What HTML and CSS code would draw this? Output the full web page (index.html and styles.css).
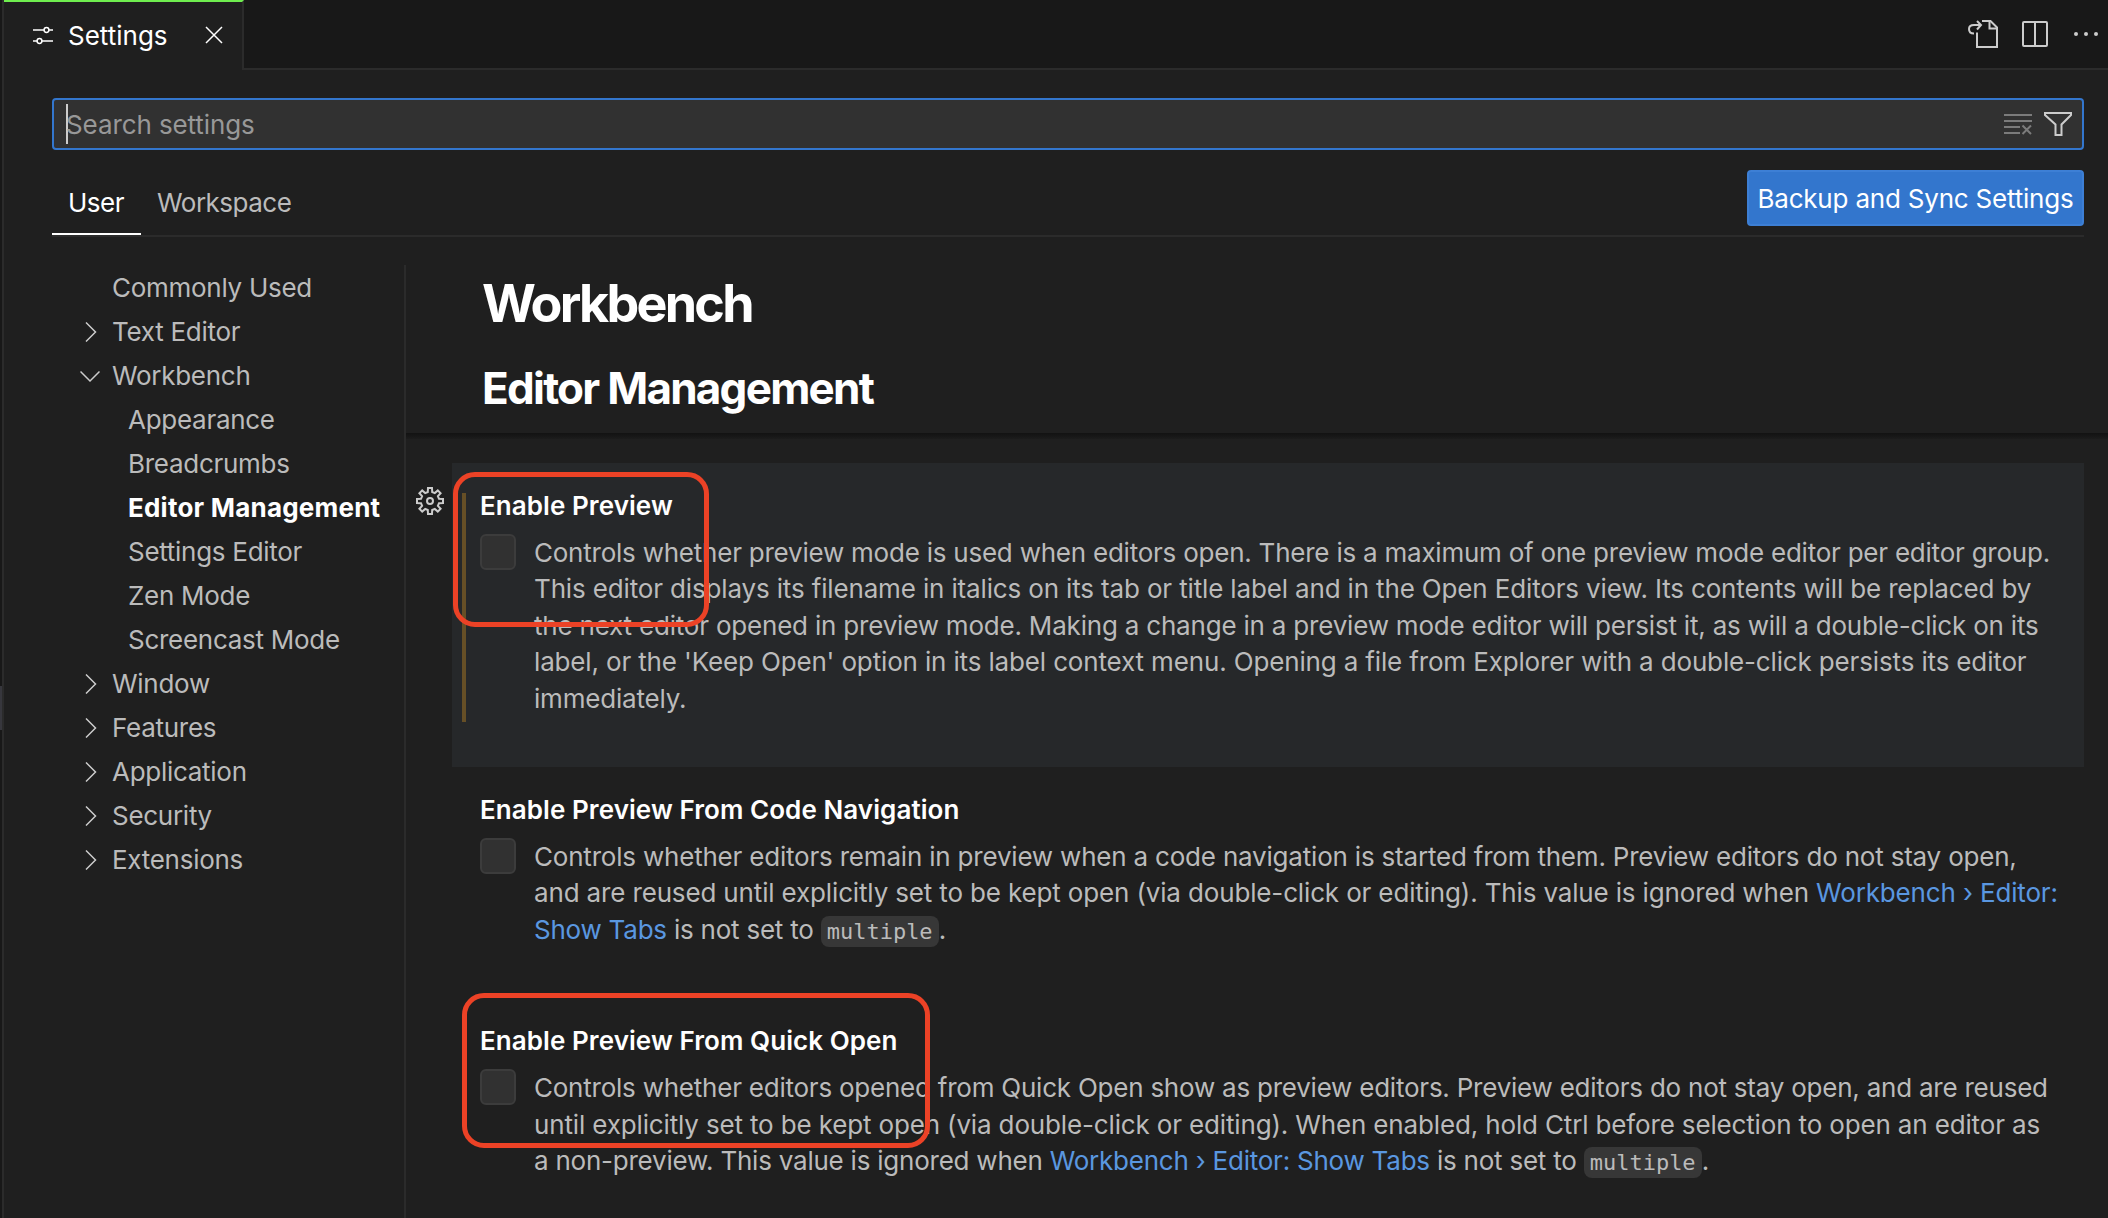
FILE: index.html
```html
<!DOCTYPE html>
<html lang="en">
<head>
  <meta charset="UTF-8">
  <meta name="viewport" content="width=device-width, initial-scale=1.0">
  <title>Settings</title>
  <link rel="stylesheet" href="styles.css">
</head>
<body>
  <div class="sash"></div>
  <div class="editor">
    <header class="tab-bar">
      <div class="tab">
        <svg class="tab-icon" width="20" height="20" viewBox="0 0 20 20">
          <path d="M0 5h11M16 5h4M0 16h4M9 16h11"/>
          <circle cx="13.5" cy="5" r="2.4"/>
          <circle cx="6.5" cy="16" r="2.4"/>
        </svg>
        <span class="tab-label">Settings</span>
        <svg class="tab-close" width="18" height="18" viewBox="0 0 18 18">
          <path d="M1 1l16 16M17 1L1 17"/>
        </svg>
      </div>
      <div class="tab-actions">
        <svg width="30" height="30" viewBox="0 0 30 30">
          <path d="M14 2h8.500l6.500 6.500v19.500h-20v-14.500"/>
          <path d="M21.500 2v7.500h7.500"/>
          <path d="M6 14.500c-3 0-5-1.800-5-4.500s2-4 5-4h7M9 2l4 4-4 4.500"/>
        </svg>
        <svg width="26" height="26" viewBox="0 0 26 26">
          <rect x="1" y="1" width="24" height="24" rx="1"/>
          <path d="M13 1v24"/>
        </svg>
        <svg class="dots" width="24" height="6" viewBox="0 0 24 6">
          <circle cx="2" cy="3" r="2"/>
          <circle cx="12" cy="3" r="2"/>
          <circle cx="22" cy="3" r="2"/>
        </svg>
      </div>
    </header>

    <div class="settings-header">
      <div class="search">
        <span class="caret"></span>
        <span class="placeholder">Search settings</span>
        <svg class="clear-icon" width="28" height="22" viewBox="0 0 28 22">
          <path d="M0 2h28M0 8h28M0 14h16M0 20h16M18.500 12.500l8.500 8.500M27 12.500l-8.500 8.500"/>
        </svg>
        <svg class="filter-icon" width="28" height="24" viewBox="0 0 28 24">
          <path d="M1 1h26v2l-9.500 9.500v10.500h-6v-10.500L1 3z"/>
        </svg>
      </div>
      <div class="scope-row">
        <div class="scope active">User</div>
        <div class="scope">Workspace</div>
        <button class="sync-button">Backup and Sync Settings</button>
      </div>
    </div>

    <div class="settings-body">
      <nav class="toc">
        <div class="toc-row">Commonly Used</div>
        <div class="toc-row"><svg class="chevron" width="20" height="20" viewBox="0 0 20 20"><path d="M6 .5l9.500 9.500L6 19.500"/></svg>Text Editor</div>
        <div class="toc-row"><svg class="chevron" width="20" height="20" viewBox="0 0 20 20"><path d="M.5 5.500l9.500 9.500 9.500-9.500"/></svg>Workbench</div>
        <div class="toc-row child">Appearance</div>
        <div class="toc-row child">Breadcrumbs</div>
        <div class="toc-row child selected">Editor Management</div>
        <div class="toc-row child">Settings Editor</div>
        <div class="toc-row child">Zen Mode</div>
        <div class="toc-row child">Screencast Mode</div>
        <div class="toc-row"><svg class="chevron" width="20" height="20" viewBox="0 0 20 20"><path d="M6 .5l9.500 9.500L6 19.500"/></svg>Window</div>
        <div class="toc-row"><svg class="chevron" width="20" height="20" viewBox="0 0 20 20"><path d="M6 .5l9.500 9.500L6 19.500"/></svg>Features</div>
        <div class="toc-row"><svg class="chevron" width="20" height="20" viewBox="0 0 20 20"><path d="M6 .5l9.500 9.500L6 19.500"/></svg>Application</div>
        <div class="toc-row"><svg class="chevron" width="20" height="20" viewBox="0 0 20 20"><path d="M6 .5l9.500 9.500L6 19.500"/></svg>Security</div>
        <div class="toc-row"><svg class="chevron" width="20" height="20" viewBox="0 0 20 20"><path d="M6 .5l9.500 9.500L6 19.500"/></svg>Extensions</div>
      </nav>

      <main class="content">
        <div class="headings">
          <h1>Workbench</h1>
          <h2>Editor Management</h2>
        </div>
        <div class="scroll-shadow"></div>

        <section class="setting focused">
          <svg class="gear" width="28" height="28" viewBox="-14 -14 28 28">
            <path d="M-2.200-9L-2-13h4l.2 4 2.600 1.100L7.800-10.600l2.800 2.800L7.900-4.800 9-2.200l4 .2v4l-4 .2-1.100 2.600 2.700 3-2.800 2.800-3-2.700L2.200 9 2 13h-4l-.2-4-2.600-1.100-3 2.700-2.800-2.800 2.700-3L-9 2.200-13 2v-4l4-.2 1.100-2.600-2.700-3 2.800-2.800 3 2.700z"/>
            <circle cx="0" cy="0" r="3"/>
          </svg>
          <span class="modified"></span>
          <h3>Enable Preview</h3>
          <div class="setting-row">
            <span class="checkbox"></span>
            <p>
              <span class="tight">Controls whether preview mode is used when editors open. There is a maximum of one preview mode editor per editor group.</span><br>
              <span class="loose">This editor displays its filename in italics on its tab or title label and in the Open Editors view. Its contents will be replaced by</span><br>
              the next editor opened in preview mode. Making a change in a preview mode editor will persist it, as will a double-click on its<br>
              <span class="loose">label, or the 'Keep Open' option in its label context menu. Opening a file from Explorer with a double-click persists its editor</span><br>
              immediately.
            </p>
          </div>
          <span class="mark mark-preview"></span>
        </section>

        <section class="setting">
          <h3>Enable Preview From Code Navigation</h3>
          <div class="setting-row">
            <span class="checkbox"></span>
            <p>
              Controls whether editors remain in preview when a code navigation is started from them. Preview editors do not stay open,<br>
              <span class="loose">and are reused until explicitly set to be kept open (via double-click or editing). This value is ignored when <a href="#">Workbench › Editor:</a></span><br>
              <span class="tight"><a href="#">Show Tabs</a> is not set to <code>multiple</code>.</span>
            </p>
          </div>
        </section>

        <section class="setting">
          <h3>Enable Preview From Quick Open</h3>
          <div class="setting-row">
            <span class="checkbox"></span>
            <p>
              <span class="tight">Controls whether editors opened from Quick Open show as preview editors. Preview editors do not stay open, and are reused</span><br>
              <span class="loose">until explicitly set to be kept open (via double-click or editing). When enabled, hold Ctrl before selection to open an editor as</span><br>
              <span class="tight">a non-preview. This value is ignored when <a href="#">Workbench › Editor: Show Tabs</a> is not set to <code>multiple</code>.</span>
            </p>
          </div>
          <span class="mark mark-quick-open"></span>
        </section>
      </main>
    </div>
  </div>
</body>
</html>
```

FILE: styles.css
```css
:root {
  --bg: #1f1f1f;
  --bar: #181818;
  --border: #2b2b2b;
  --text: #bbbbbb;
  --blue: #3376cd;
  --link: #5a97e0;
  --mark: #ec4226;
}

* {
  box-sizing: border-box;
}

body {
  margin: 0;
  height: 1218px;
  display: flex;
  overflow: hidden;
  background: var(--bg);
  color: var(--text);
  font-family: Inter, "Liberation Sans", sans-serif;
  font-size: 26px;
  letter-spacing: -0.2px;
}

svg {
  flex: none;
  fill: none;
  stroke: #cccccc;
  stroke-width: 2;
}

.sash {
  width: 4px;
  flex: none;
  border-right: 2px solid var(--border);
  background: linear-gradient(var(--bar) 686px, #37373d 686px, #37373d 730px, var(--bar) 730px);
}

.editor {
  flex: 1;
  min-width: 0;
  display: flex;
  flex-direction: column;
}

/* tab bar */
.tab-bar {
  height: 70px;
  flex: none;
  display: flex;
  background: linear-gradient(var(--bar) 68px, var(--border) 68px);
}

.tab {
  width: 240px;
  display: flex;
  align-items: center;
  padding: 0 19px 2px 29px;
  background: var(--bg);
  border-top: 2px solid #6fee4f;
  border-right: 2px solid var(--border);
  color: #ffffff;
  letter-spacing: 0;
}

.tab svg {
  stroke: #ffffff;
  stroke-width: 1.5;
}

.tab-label {
  flex: 1;
  margin-left: 15px;
}

.tab-actions {
  flex: 1;
  display: flex;
  justify-content: flex-end;
  align-items: center;
  padding: 0 10px 2px 0;
  gap: 24px;
}

.dots {
  margin-left: 2px;
  fill: #cccccc;
  stroke: none;
}

/* search and scope tabs */
.settings-header {
  padding: 28px 24px 0 48px;
}

.search {
  height: 52px;
  display: flex;
  align-items: center;
  padding: 0 10px 0 12px;
  background: #313131;
  border: 2px solid var(--blue);
  border-radius: 4px;
}

.caret {
  width: 2px;
  height: 40px;
  margin-right: -2px;
  background: #cccccc;
}

.placeholder {
  flex: 1;
  color: #989898;
  letter-spacing: -0.1px;
}

.clear-icon {
  margin-right: 12px;
  stroke: #7b7b7b;
}

.scope-row {
  height: 87px;
  display: flex;
  align-items: flex-end;
  border-bottom: 2px solid var(--border);
}

.scope {
  height: 63px;
  padding: 0 16px;
  line-height: 62px;
  letter-spacing: -0.5px;
}

.scope.active {
  width: 89px;
  color: #ffffff;
  border-bottom: 2px solid #ffffff;
}

.sync-button {
  width: 337px;
  height: 56px;
  margin: 0 0 9px auto;
  padding: 0;
  background: var(--blue);
  border: 2px solid #3d7fd5;
  border-radius: 4px;
  color: #ffffff;
  font: inherit;
  letter-spacing: inherit;
}

/* sections tree */
.settings-body {
  flex: 1;
  min-height: 0;
  display: flex;
  padding-top: 28px;
}

.toc {
  width: 402px;
  flex: none;
  border-right: 2px solid var(--border);
  padding: 1px 0 0 108px;
  letter-spacing: -0.28px;
}

.toc-row {
  height: 44px;
  line-height: 46px;
  display: flex;
  align-items: center;
}

.toc-row.child {
  padding-left: 16px;
}

.toc-row.selected {
  color: #ffffff;
  font-weight: 700;
  letter-spacing: 0.22px;
}

.chevron {
  margin: 0 12px 0 -32px;
  stroke-width: 1.5;
}

/* settings list */
.content {
  flex: 1;
  min-width: 0;
}

.headings {
  height: 168px;
  padding: 2px 0 0 76px;
  color: #ffffff;
}

.scroll-shadow {
  height: 6px;
  background: linear-gradient(#121212, #1c1c1c);
}

h1, h2, h3, p {
  margin: 0;
}

h1 {
  font-size: 52px;
  line-height: 73px;
  font-weight: 650;
  letter-spacing: -2.75px;
}

h2 {
  margin-top: 17px;
  font-size: 44px;
  line-height: 62px;
  font-weight: 650;
  letter-spacing: -1.75px;
}

.setting {
  position: relative;
  margin: 0 24px 0 46px;
  padding: 26px 0 50px 28px;
}

.setting.focused {
  margin-top: 24px;
  background: #26282a;
}

.setting h3 {
  color: #ffffff;
  font-size: 26px;
  line-height: 34px;
  font-weight: 600;
  letter-spacing: 0.07px;
}

.setting-row {
  display: flex;
  align-items: flex-start;
  padding-top: 11px;
}

.checkbox {
  width: 36px;
  height: 36px;
  flex: none;
  margin-right: 18px;
  background: #313131;
  border: 2px solid #3c3c3c;
  border-radius: 6px;
}

.setting p {
  padding-top: 1px;
  line-height: 36.4px;
  white-space: nowrap;
}

.tight {
  letter-spacing: -0.23px;
}

.loose {
  letter-spacing: -0.15px;
}

a {
  color: var(--link);
  text-decoration: none;
}

code {
  padding: 3px 6px;
  background: #373737;
  border-radius: 8px;
  font-family: "DejaVu Sans Mono", monospace;
  font-size: 22px;
  line-height: 28px;
  letter-spacing: 0;
}

.gear {
  position: absolute;
  left: -36px;
  top: 24px;
}

.modified {
  position: absolute;
  left: 10px;
  top: 30px;
  width: 4px;
  height: 229px;
  background: #664f26;
}

.mark {
  position: absolute;
  border: 5px solid var(--mark);
  border-radius: 22px;
}

.mark-preview {
  left: 1px;
  top: 9px;
  width: 256px;
  height: 155px;
}

.mark-quick-open {
  left: 10px;
  top: -5px;
  width: 468px;
  height: 155px;
}
```
